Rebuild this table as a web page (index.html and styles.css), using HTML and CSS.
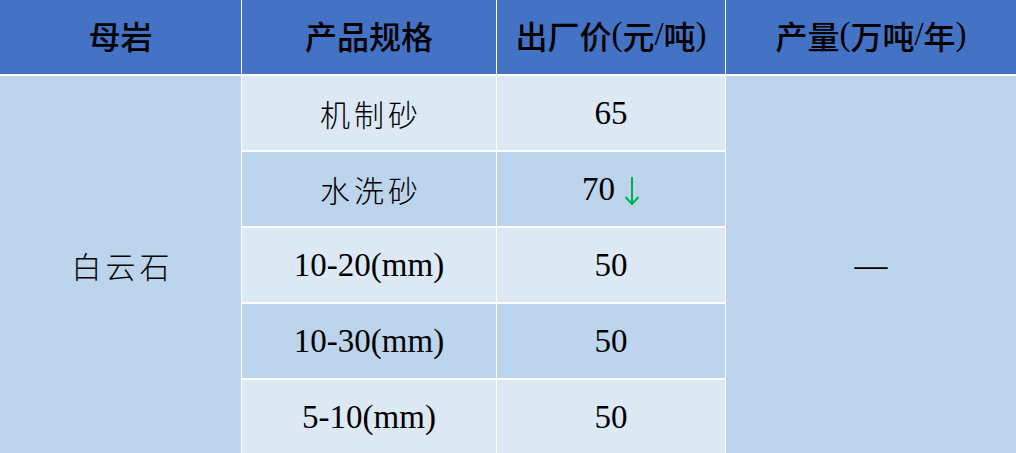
FILE: index.html
```html
<!DOCTYPE html>
<html lang="zh">
<head>
<meta charset="utf-8">
<title>母岩产品价格表</title>
<link rel="stylesheet" href="styles.css">
</head>
<body>
<div class="table">
  <div class="cell head">母岩</div>
  <div class="cell head">产品规格</div>
  <div class="cell head">出厂价<span class="lat">(</span>元<span class="lat">/</span>吨<span class="lat">)</span></div>
  <div class="cell head">产量<span class="lat">(</span>万吨<span class="lat">/</span>年<span class="lat">)</span></div>

  <div class="cell dark rock"><span class="cjk">白云石</span></div>
  <div class="cell light"><span class="cjk">机制砂</span></div>
  <div class="cell light num">65</div>
  <div class="cell dark output num">—</div>

  <div class="cell dark"><span class="cjk">水洗砂</span></div>
  <div class="cell dark num">70<span class="arrow"><svg width="16" height="30" viewBox="0 0 16 30"><path d="M8 1 V28 M1.5 21 L8 28 L14.5 21" fill="none" stroke="#00B050" stroke-width="2"/></svg></span></div>

  <div class="cell light num">10-20(mm)</div>
  <div class="cell light num">50</div>

  <div class="cell dark num">10-30(mm)</div>
  <div class="cell dark num">50</div>

  <div class="cell light num">5-10(mm)</div>
  <div class="cell light num">50</div>
</div>
</body>
</html>
```

FILE: styles.css
```css
html, body {
  margin: 0;
  padding: 0;
  background: #ffffff;
}

.table {
  display: grid;
  grid-template-columns: 241px 254px 228px 1fr;
  grid-template-rows: 74px repeat(5, 74px);
  column-gap: 1px;
  row-gap: 2px;
  width: 1016px;
  background: #ffffff;
}

.cell {
  display: flex;
  align-items: center;
  justify-content: center;
  color: #000000;
}

.head {
  background: #4472C4;
  font-family: "Noto Sans CJK SC", "Liberation Sans", sans-serif;
  font-weight: 500;
  font-size: 32px;
  padding-bottom: 5px;
  box-sizing: border-box;
}

.head .lat {
  font-family: "Liberation Serif", serif;
  font-weight: 400;
  font-size: 33px;
}

.dark {
  background: #BDD5EC;
}

.light {
  background: #DDE8F5;
}

.cjk {
  font-family: "Noto Sans CJK SC", sans-serif;
  font-weight: 300;
  font-size: 30px;
  letter-spacing: 4px;
  margin-right: -4px;
}

.num {
  font-family: "Liberation Serif", serif;
  font-size: 33px;
}

.rock {
  grid-row: 2 / span 5;
  grid-column: 1;
}

.output {
  grid-row: 2 / span 5;
  grid-column: 4;
}

.arrow {
  display: inline-flex;
  margin-left: 9px;
  margin-top: 4px;
}
```
